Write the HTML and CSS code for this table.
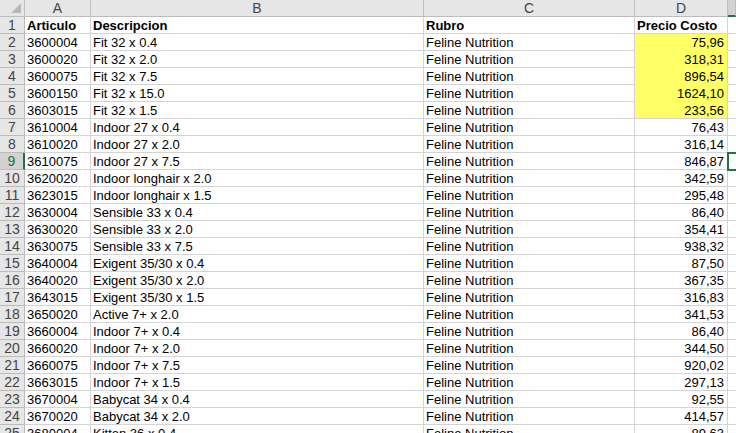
FILE: index.html
```html
<!DOCTYPE html>
<html>
<head>
<meta charset="utf-8">
<link rel="stylesheet" href="styles.css">
</head>
<body>
<div class="sheet">
  <div class="hd corner"><span class="tri"></span></div>
  <div class="hd col">A</div>
  <div class="hd col">B</div>
  <div class="hd col">C</div>
  <div class="hd col">D</div>
  <div class="hd col sel-col"></div>

  <div class="hd rn">1</div><div class="c b">Articulo</div><div class="c b">Descripcion</div><div class="c b">Rubro</div><div class="c b">Precio Costo</div><div class="c e"></div>
  <div class="hd rn">2</div><div class="c">3600004</div><div class="c">Fit 32 x 0.4</div><div class="c">Feline Nutrition</div><div class="c n y">75,96</div><div class="c e"></div>
  <div class="hd rn">3</div><div class="c">3600020</div><div class="c">Fit 32 x 2.0</div><div class="c">Feline Nutrition</div><div class="c n y">318,31</div><div class="c e"></div>
  <div class="hd rn">4</div><div class="c">3600075</div><div class="c">Fit 32 x 7.5</div><div class="c">Feline Nutrition</div><div class="c n y">896,54</div><div class="c e"></div>
  <div class="hd rn">5</div><div class="c">3600150</div><div class="c">Fit 32 x 15.0</div><div class="c">Feline Nutrition</div><div class="c n y">1624,10</div><div class="c e"></div>
  <div class="hd rn">6</div><div class="c">3603015</div><div class="c">Fit 32 x 1.5</div><div class="c">Feline Nutrition</div><div class="c n y last">233,56</div><div class="c e"></div>
  <div class="hd rn">7</div><div class="c">3610004</div><div class="c">Indoor 27 x 0.4</div><div class="c">Feline Nutrition</div><div class="c n">76,43</div><div class="c e"></div>
  <div class="hd rn">8</div><div class="c">3610020</div><div class="c">Indoor 27 x 2.0</div><div class="c">Feline Nutrition</div><div class="c n">316,14</div><div class="c e"></div>
  <div class="hd rn sel-row">9</div><div class="c">3610075</div><div class="c">Indoor 27 x 7.5</div><div class="c">Feline Nutrition</div><div class="c n">846,87</div><div class="c e active"></div>
  <div class="hd rn">10</div><div class="c">3620020</div><div class="c">Indoor longhair x 2.0</div><div class="c">Feline Nutrition</div><div class="c n">342,59</div><div class="c e"></div>
  <div class="hd rn">11</div><div class="c">3623015</div><div class="c">Indoor longhair x 1.5</div><div class="c">Feline Nutrition</div><div class="c n">295,48</div><div class="c e"></div>
  <div class="hd rn">12</div><div class="c">3630004</div><div class="c">Sensible 33 x 0.4</div><div class="c">Feline Nutrition</div><div class="c n">86,40</div><div class="c e"></div>
  <div class="hd rn">13</div><div class="c">3630020</div><div class="c">Sensible 33 x 2.0</div><div class="c">Feline Nutrition</div><div class="c n">354,41</div><div class="c e"></div>
  <div class="hd rn">14</div><div class="c">3630075</div><div class="c">Sensible 33 x 7.5</div><div class="c">Feline Nutrition</div><div class="c n">938,32</div><div class="c e"></div>
  <div class="hd rn">15</div><div class="c">3640004</div><div class="c">Exigent 35/30 x 0.4</div><div class="c">Feline Nutrition</div><div class="c n">87,50</div><div class="c e"></div>
  <div class="hd rn">16</div><div class="c">3640020</div><div class="c">Exigent 35/30 x 2.0</div><div class="c">Feline Nutrition</div><div class="c n">367,35</div><div class="c e"></div>
  <div class="hd rn">17</div><div class="c">3643015</div><div class="c">Exigent 35/30 x 1.5</div><div class="c">Feline Nutrition</div><div class="c n">316,83</div><div class="c e"></div>
  <div class="hd rn">18</div><div class="c">3650020</div><div class="c">Active 7+ x 2.0</div><div class="c">Feline Nutrition</div><div class="c n">341,53</div><div class="c e"></div>
  <div class="hd rn">19</div><div class="c">3660004</div><div class="c">Indoor 7+ x 0.4</div><div class="c">Feline Nutrition</div><div class="c n">86,40</div><div class="c e"></div>
  <div class="hd rn">20</div><div class="c">3660020</div><div class="c">Indoor 7+ x 2.0</div><div class="c">Feline Nutrition</div><div class="c n">344,50</div><div class="c e"></div>
  <div class="hd rn">21</div><div class="c">3660075</div><div class="c">Indoor 7+ x 7.5</div><div class="c">Feline Nutrition</div><div class="c n">920,02</div><div class="c e"></div>
  <div class="hd rn">22</div><div class="c">3663015</div><div class="c">Indoor 7+ x 1.5</div><div class="c">Feline Nutrition</div><div class="c n">297,13</div><div class="c e"></div>
  <div class="hd rn">23</div><div class="c">3670004</div><div class="c">Babycat 34 x 0.4</div><div class="c">Feline Nutrition</div><div class="c n">92,55</div><div class="c e"></div>
  <div class="hd rn">24</div><div class="c">3670020</div><div class="c">Babycat 34 x 2.0</div><div class="c">Feline Nutrition</div><div class="c n">414,57</div><div class="c e"></div>
  <div class="hd rn">25</div><div class="c">3680004</div><div class="c">Kitten 36 x 0.4</div><div class="c">Feline Nutrition</div><div class="c n">89,63</div><div class="c e"></div>
</div>
</body>
</html>
```

FILE: styles.css
```css
html, body {
  margin: 0;
  padding: 0;
  background: #ffffff;
  overflow: hidden;
}
.sheet {
  display: grid;
  grid-template-columns: 25px 66px 333px 211px 93px 1fr;
  grid-auto-rows: 17px;
  font-family: "Liberation Sans", Arial, sans-serif;
  font-size: 13px;
  color: #000;
}
.hd {
  background: #e6e6e6;
  border-right: 1px solid #bcbcbc;
  border-bottom: 1px solid #bcbcbc;
  box-sizing: border-box;
  color: #444;
  font-size: 14px;
  line-height: 16px;
  text-align: center;
  overflow: hidden;
  white-space: nowrap;
}
.col {
  line-height: 16px;
}
.corner {
  position: relative;
}
.tri {
  position: absolute;
  right: 3px;
  bottom: 3px;
  width: 0;
  height: 0;
  border-left: 10px solid transparent;
  border-bottom: 10px solid #b8b8b8;
}
.rn {
  font-size: 14px;
  line-height: 17px;
}
.sel-row {
  background: #d2d2d2;
  color: #217346;
  border-right: 2px solid #217346;
}
.sel-col {
  background: #d2d2d2;
  border-bottom: 2px solid #217346;
}
.c {
  box-sizing: border-box;
  border-right: 1px solid #d4d4d4;
  border-bottom: 1px solid #d4d4d4;
  padding: 0 3px 0 2px;
  line-height: 17px;
  white-space: nowrap;
  overflow: hidden;
}
.b {
  font-weight: bold;
}
.n {
  text-align: right;
}
.y {
  background: #ffff66;
  border-bottom-color: #ffff66;
}
.y.last {
  border-bottom-color: #d4d4d4;
}
.e {
  border-right: none;
}
.active {
  position: relative;
  overflow: visible;
}
.active::after {
  content: "";
  position: absolute;
  left: -1px;
  top: -1px;
  width: 20px;
  height: 15px;
  border: 2px solid #217346;
}
```
